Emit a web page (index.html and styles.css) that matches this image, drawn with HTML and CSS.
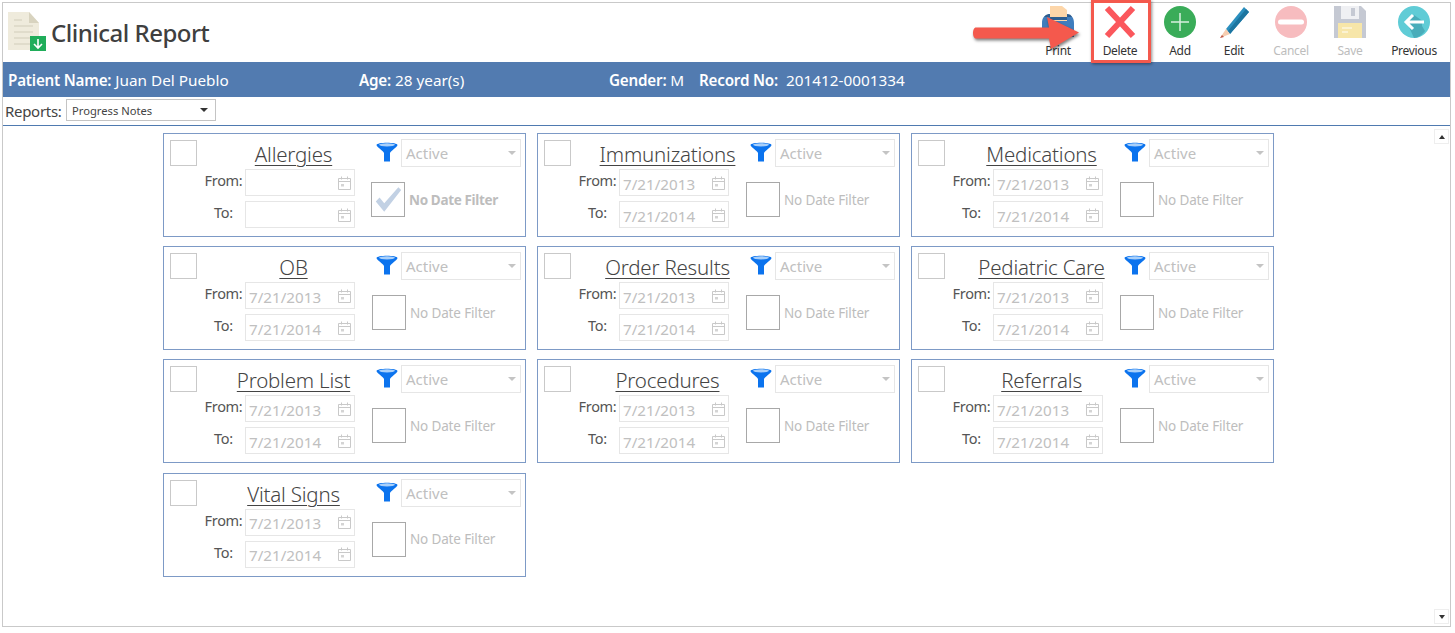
FILE: index.html
```html
<!DOCTYPE html>
<html lang="en">
<head>
<meta charset="utf-8">
<title>Clinical Report</title>
<link rel="stylesheet" href="styles.css">
</head>
<body>
<svg class="defs" width="0" height="0" aria-hidden="true">
  <symbol id="funnel" viewBox="0 0 22 21">
    <path d="M.5 4C.5 1 21.500 1 21.500 4C21.500 6 15 9.500 14 12V20.500H8V12C7 9.500 .5 6 .5 4Z" fill="#0b73ee"/>
    <ellipse cx="11" cy="3.800" rx="8" ry="1.600" fill="#a9d0fa"/>
  </symbol>
  <symbol id="cal" viewBox="0 0 13 14">
    <path d="M.5 2.500h12v11H.5zM.5 5.500h12M3.500 .5v3M9.500 .5v3" fill="none" stroke="#c9c9c9"/>
    <path d="M3 8h3v2.500H3z" fill="#d4d4d4"/>
  </symbol>
</svg>
<div class="window">
  <header class="topbar">
    <svg class="logo" width="40" height="40" viewBox="0 0 40 40">
      <path d="M0 0H21L31 11V38H0Z" fill="#efebdc"/>
      <path d="M21 0L31 11H21Z" fill="#d8d3bf"/>
      <path d="M6 8H14M6 14H25M6 20H25M6 26H25M6 32H22" stroke="#dcd7c5" stroke-width="1.500"/>
      <path d="M22 24H38V39H22Z" fill="#20ad5a"/>
      <path d="M30 27V36M26 32L30 36L34 32" fill="none" stroke="#fff" stroke-width="1.600"/>
    </svg>
    <h1 class="title">Clinical Report</h1>
    <nav class="toolbar">
      <div class="tool">
        <svg width="34" height="34" viewBox="0 0 34 34">
          <path d="M9 1H21L26 5V20H9Z" fill="#fdd6a9"/>
          <path d="M1 18C1 12 4 10 9 10V16H26V10C30 10 33 12 33 18V32H1Z" fill="#3f7dbd"/>
          <path d="M3 12C5 9 7 9 9 9V15H26V9C29 9 30 10 31 12Z" fill="#2e5e90"/>
        </svg>
        <span>Print</span>
      </div>
      <div class="tool">
        <svg width="34" height="34" viewBox="0 0 34 34">
          <path d="M4 3L30 31M30 3L4 31" stroke="#fb575c" stroke-width="6"/>
        </svg>
        <span>Delete</span>
      </div>
      <div class="tool">
        <svg width="34" height="34" viewBox="0 0 34 34">
          <circle cx="17" cy="17" r="16" fill="#3aac59"/>
          <path d="M17 8V26M8 17H26" stroke="#d8f0df" stroke-width="1.500"/>
        </svg>
        <span>Add</span>
      </div>
      <div class="tool">
        <svg width="34" height="34" viewBox="0 0 34 34">
          <path d="M9 24L27 2L32 7L13 29Z" fill="#2b8fbe"/>
          <path d="M11 26L29 4L32 7L13 29Z" fill="#1c75a0"/>
          <path d="M9 24L13 29L3 33Z" fill="#f6cdb0"/>
          <path d="M5 30L7 32L3 33Z" fill="#c05a4a"/>
        </svg>
        <span>Edit</span>
      </div>
      <div class="tool off">
        <svg width="34" height="34" viewBox="0 0 34 34">
          <circle cx="17" cy="17" r="16" fill="#f7bcbf"/>
          <path d="M6.500 17H27.500" stroke="#fff" stroke-width="5" stroke-linecap="round"/>
        </svg>
        <span>Cancel</span>
      </div>
      <div class="tool off">
        <svg width="34" height="34" viewBox="0 0 34 34">
          <path d="M1 1H28L33 6V33H1Z" fill="#c5c9d3"/>
          <path d="M8 1H26V14H8Z" fill="#eff0f3"/>
          <path d="M18 3H22V11H18Z" fill="#c5c9d3"/>
          <path d="M5 18H29V33H5Z" fill="#f7e6a9"/>
          <path d="M9 23H19M9 27H15" stroke="#fdf6de" stroke-width="1.500"/>
        </svg>
        <span>Save</span>
      </div>
      <div class="tool">
        <svg width="34" height="34" viewBox="0 0 34 34">
          <circle cx="17" cy="17" r="16" fill="#60ccd6"/>
          <path d="M10 17L17 10L27 17H25V21L28 26C25 30 21 33 17 33L12 22Z" fill="#49adba"/>
          <path d="M27 17H9M16 10L9 17L16 24" fill="none" stroke="#fff" stroke-width="3"/>
        </svg>
        <span>Previous</span>
      </div>
    </nav>
  </header>
  <div class="band">
    <div class="field f-name"><b>Patient Name:</b> Juan Del Pueblo</div>
    <div class="field f-age"><b>Age:</b> 28 year(s)</div>
    <div class="field f-gender"><b>Gender:</b> M</div>
    <div class="field f-record"><b>Record No:</b><span class="rec">201412-0001334</span></div>
  </div>
  <div class="reports">
    <label class="reports-label">Reports:</label>
    <div class="reports-select"><span>Progress Notes</span><i class="caret dark"></i></div>
  </div>
  <main class="content">
    <section class="cards">
      <article class="card">
        <div class="card-head">
          <div class="check"></div>
          <h2 class="card-title"><span>Allergies</span></h2>
          <svg class="funnel" width="22" height="21"><use href="#funnel"/></svg>
          <div class="status"><span>Active</span><i class="caret"></i></div>
        </div>
        <div class="card-body">
          <div class="dates">
            <div class="date-row"><label>From:</label><div class="date"><span></span><svg width="13" height="14"><use href="#cal"/></svg></div></div>
            <div class="date-row"><label>To:</label><div class="date"><span></span><svg width="13" height="14"><use href="#cal"/></svg></div></div>
          </div>
          <div class="nofilter on">
            <div class="bigcheck"><svg width="32" height="33" viewBox="0 0 34 34"><path d="M4 19L8 15L13 21L28 4L31 7L13 30Z" fill="#c2d1e4"/></svg></div>
            <span>No Date Filter</span>
          </div>
        </div>
      </article>
      <article class="card">
        <div class="card-head">
          <div class="check"></div>
          <h2 class="card-title"><span>Immunizations</span></h2>
          <svg class="funnel" width="22" height="21"><use href="#funnel"/></svg>
          <div class="status"><span>Active</span><i class="caret"></i></div>
        </div>
        <div class="card-body">
          <div class="dates">
            <div class="date-row"><label>From:</label><div class="date"><span>7/21/2013</span><svg width="13" height="14"><use href="#cal"/></svg></div></div>
            <div class="date-row"><label>To:</label><div class="date"><span>7/21/2014</span><svg width="13" height="14"><use href="#cal"/></svg></div></div>
          </div>
          <div class="nofilter"><div class="bigcheck"></div><span>No Date Filter</span></div>
        </div>
      </article>
      <article class="card">
        <div class="card-head">
          <div class="check"></div>
          <h2 class="card-title"><span>Medications</span></h2>
          <svg class="funnel" width="22" height="21"><use href="#funnel"/></svg>
          <div class="status"><span>Active</span><i class="caret"></i></div>
        </div>
        <div class="card-body">
          <div class="dates">
            <div class="date-row"><label>From:</label><div class="date"><span>7/21/2013</span><svg width="13" height="14"><use href="#cal"/></svg></div></div>
            <div class="date-row"><label>To:</label><div class="date"><span>7/21/2014</span><svg width="13" height="14"><use href="#cal"/></svg></div></div>
          </div>
          <div class="nofilter"><div class="bigcheck"></div><span>No Date Filter</span></div>
        </div>
      </article>
      <article class="card">
        <div class="card-head">
          <div class="check"></div>
          <h2 class="card-title"><span>OB</span></h2>
          <svg class="funnel" width="22" height="21"><use href="#funnel"/></svg>
          <div class="status"><span>Active</span><i class="caret"></i></div>
        </div>
        <div class="card-body">
          <div class="dates">
            <div class="date-row"><label>From:</label><div class="date"><span>7/21/2013</span><svg width="13" height="14"><use href="#cal"/></svg></div></div>
            <div class="date-row"><label>To:</label><div class="date"><span>7/21/2014</span><svg width="13" height="14"><use href="#cal"/></svg></div></div>
          </div>
          <div class="nofilter"><div class="bigcheck"></div><span>No Date Filter</span></div>
        </div>
      </article>
      <article class="card">
        <div class="card-head">
          <div class="check"></div>
          <h2 class="card-title"><span>Order Results</span></h2>
          <svg class="funnel" width="22" height="21"><use href="#funnel"/></svg>
          <div class="status"><span>Active</span><i class="caret"></i></div>
        </div>
        <div class="card-body">
          <div class="dates">
            <div class="date-row"><label>From:</label><div class="date"><span>7/21/2013</span><svg width="13" height="14"><use href="#cal"/></svg></div></div>
            <div class="date-row"><label>To:</label><div class="date"><span>7/21/2014</span><svg width="13" height="14"><use href="#cal"/></svg></div></div>
          </div>
          <div class="nofilter"><div class="bigcheck"></div><span>No Date Filter</span></div>
        </div>
      </article>
      <article class="card">
        <div class="card-head">
          <div class="check"></div>
          <h2 class="card-title"><span>Pediatric Care</span></h2>
          <svg class="funnel" width="22" height="21"><use href="#funnel"/></svg>
          <div class="status"><span>Active</span><i class="caret"></i></div>
        </div>
        <div class="card-body">
          <div class="dates">
            <div class="date-row"><label>From:</label><div class="date"><span>7/21/2013</span><svg width="13" height="14"><use href="#cal"/></svg></div></div>
            <div class="date-row"><label>To:</label><div class="date"><span>7/21/2014</span><svg width="13" height="14"><use href="#cal"/></svg></div></div>
          </div>
          <div class="nofilter"><div class="bigcheck"></div><span>No Date Filter</span></div>
        </div>
      </article>
      <article class="card">
        <div class="card-head">
          <div class="check"></div>
          <h2 class="card-title"><span>Problem List</span></h2>
          <svg class="funnel" width="22" height="21"><use href="#funnel"/></svg>
          <div class="status"><span>Active</span><i class="caret"></i></div>
        </div>
        <div class="card-body">
          <div class="dates">
            <div class="date-row"><label>From:</label><div class="date"><span>7/21/2013</span><svg width="13" height="14"><use href="#cal"/></svg></div></div>
            <div class="date-row"><label>To:</label><div class="date"><span>7/21/2014</span><svg width="13" height="14"><use href="#cal"/></svg></div></div>
          </div>
          <div class="nofilter"><div class="bigcheck"></div><span>No Date Filter</span></div>
        </div>
      </article>
      <article class="card">
        <div class="card-head">
          <div class="check"></div>
          <h2 class="card-title"><span>Procedures</span></h2>
          <svg class="funnel" width="22" height="21"><use href="#funnel"/></svg>
          <div class="status"><span>Active</span><i class="caret"></i></div>
        </div>
        <div class="card-body">
          <div class="dates">
            <div class="date-row"><label>From:</label><div class="date"><span>7/21/2013</span><svg width="13" height="14"><use href="#cal"/></svg></div></div>
            <div class="date-row"><label>To:</label><div class="date"><span>7/21/2014</span><svg width="13" height="14"><use href="#cal"/></svg></div></div>
          </div>
          <div class="nofilter"><div class="bigcheck"></div><span>No Date Filter</span></div>
        </div>
      </article>
      <article class="card">
        <div class="card-head">
          <div class="check"></div>
          <h2 class="card-title"><span>Referrals</span></h2>
          <svg class="funnel" width="22" height="21"><use href="#funnel"/></svg>
          <div class="status"><span>Active</span><i class="caret"></i></div>
        </div>
        <div class="card-body">
          <div class="dates">
            <div class="date-row"><label>From:</label><div class="date"><span>7/21/2013</span><svg width="13" height="14"><use href="#cal"/></svg></div></div>
            <div class="date-row"><label>To:</label><div class="date"><span>7/21/2014</span><svg width="13" height="14"><use href="#cal"/></svg></div></div>
          </div>
          <div class="nofilter"><div class="bigcheck"></div><span>No Date Filter</span></div>
        </div>
      </article>
      <article class="card">
        <div class="card-head">
          <div class="check"></div>
          <h2 class="card-title"><span>Vital Signs</span></h2>
          <svg class="funnel" width="22" height="21"><use href="#funnel"/></svg>
          <div class="status"><span>Active</span><i class="caret"></i></div>
        </div>
        <div class="card-body">
          <div class="dates">
            <div class="date-row"><label>From:</label><div class="date"><span>7/21/2013</span><svg width="13" height="14"><use href="#cal"/></svg></div></div>
            <div class="date-row"><label>To:</label><div class="date"><span>7/21/2014</span><svg width="13" height="14"><use href="#cal"/></svg></div></div>
          </div>
          <div class="nofilter"><div class="bigcheck"></div><span>No Date Filter</span></div>
        </div>
      </article>
    </section>
    <div class="scroll">
      <button class="scroll-btn"><i class="tri up"></i></button>
      <button class="scroll-btn"><i class="tri down"></i></button>
    </div>
  </main>
  <div class="callout-box"></div>
  <svg class="callout-arrow" width="112" height="40" viewBox="0 0 112 40">
    <path d="M5 11.500H78L76 1L108 16.500L80 33L78 22.500H5C1 22.500 1 11.500 5 11.500Z" fill="#f4594d"/>
  </svg>
</div>
</body>
</html>
```
FILE: styles.css
```css
* { box-sizing: border-box; }
html, body { margin: 0; padding: 0; background: #fff; }
body {
  width: 1455px;
  height: 633px;
  overflow: hidden;
  font-family: "Noto Sans", "Open Sans", sans-serif;
  color: #444;
}
.defs { position: absolute; }
.window {
  position: relative;
  margin: 2px 0 0 2px;
  width: 1449px;
  height: 625px;
  border: 1px solid #c9c9c9;
  display: flex;
  flex-direction: column;
}
.topbar {
  height: 59px;
  flex: none;
  display: flex;
  align-items: flex-start;
}
.logo { margin: 9px 0 0 5px; flex: none; }
.title {
  margin: 13px 0 0 3px;
  font-size: 24px;
  font-weight: 500;
  line-height: 34px;
  color: #3f3f3f;
  letter-spacing: -0.5px;
}
.toolbar {
  margin-left: auto;
  margin-right: 1px;
  display: grid;
  grid-template-columns: 58px 66px 54px 54px 60px 58px 70px;
}
.tool {
  display: flex;
  flex-direction: column;
  align-items: center;
  padding-top: 2px;
  font-size: 12px;
  line-height: 16px;
  color: #333;
  letter-spacing: -0.3px;
}
.tool svg { display: block; }
.tool span { margin-top: 4px; }
.tool.off span { color: #bdbdbd; }
.band {
  height: 35px;
  flex: none;
  background: #527bb0;
  color: #fff;
  display: flex;
  align-items: center;
  padding-left: 5px;
  font-size: 15.300px;
}
.band b { font-weight: 600; font-size: 15.200px; letter-spacing: -0.2px; }
.field { white-space: nowrap; }
.f-name { width: 351px; }
.f-age { width: 250px; }
.f-gender { width: 90px; }
.rec { margin-left: 8px; }
.reports {
  height: 29px;
  flex: none;
  border-bottom: 1px solid #4f7ab0;
  display: flex;
  align-items: flex-start;
  padding: 2px 0 0 2px;
}
.reports-label {
  font-size: 15px;
  line-height: 24px;
  color: #444;
  width: 61px;
  letter-spacing: -0.3px;
}
.reports-select {
  width: 150px;
  height: 22px;
  border: 1px solid #c4c4c4;
  display: flex;
  align-items: center;
  justify-content: space-between;
  padding: 0 7px 0 5px;
  font-size: 11.200px;
  color: #444;
}
.caret {
  width: 0;
  height: 0;
  border-left: 4px solid transparent;
  border-right: 4px solid transparent;
  border-top: 4px solid #c4c4c4;
}
.caret.dark { border-top-color: #333; }
.content {
  flex: 1;
  display: flex;
  min-height: 0;
}
.cards {
  margin: 7px 0 0 160px;
  display: grid;
  grid-template-columns: repeat(3, 363px);
  grid-auto-rows: 104px;
  column-gap: 11px;
  row-gap: 9.200px;
  align-content: start;
}
.card {
  border: 1px solid #7d9ac6;
  padding: 5px 4px 0 5px;
}
.card-head {
  display: flex;
  align-items: flex-start;
  height: 27px;
}
.check {
  width: 27px;
  height: 26px;
  margin: 1px 0 0 1px;
  flex: none;
  border: 1px solid #c9c9c9;
}
.card-title {
  margin: 0;
  width: 179px;
  flex: none;
  padding-left: 14px;
  text-align: center;
  font-size: 20.500px;
  font-weight: 300;
  line-height: 30px;
  color: #444;
  white-space: nowrap;
  letter-spacing: -0.2px;
}
.card-title span { text-decoration: underline; text-decoration-thickness: 1px; text-underline-offset: 3px; }
.funnel { flex: none; margin-top: 2px; }
.status {
  margin-left: 3px;
  width: 120px;
  height: 28px;
  flex: none;
  border: 1px solid #e6e6e6;
  display: flex;
  align-items: center;
  justify-content: space-between;
  padding: 0 4px 0 4px;
  font-size: 15px;
  color: #c0c0c0;
}
.card-body {
  display: flex;
  margin-top: 3px;
  align-items: flex-start;
}
.dates {
  width: 186px;
  display: flex;
  flex-direction: column;
  gap: 5px;
  flex: none;
}
.date-row {
  display: flex;
  height: 27px;
}
.date-row label {
  width: 76px;
  padding-left: 33px;
  text-align: center;
  font-size: 14.500px;
  line-height: 22px;
  color: #555;
  letter-spacing: -0.3px;
}
.date {
  width: 110px;
  height: 27px;
  border: 1px solid #e6e6e6;
  display: flex;
  align-items: center;
  justify-content: space-between;
  padding: 0 3px 0 3px;
  font-size: 15.200px;
  color: #c0c0c0;
}
.date span { padding-top: 2px; }
.nofilter {
  display: flex;
  align-items: center;
  margin: 13px 0 0 17px;
  font-size: 13.500px;
  color: #bdbdbd;
  white-space: nowrap;
  letter-spacing: -0.15px;
}
.nofilter.on { font-weight: 700; margin-left: 16px; letter-spacing: -0.35px; }
.bigcheck {
  width: 34px;
  height: 35px;
  margin-right: 4px;
  flex: none;
  border: 1px solid #a8a8a8;
}
.bigcheck svg { display: block; }
.scroll {
  margin-left: auto;
  width: 15px;
  margin-right: 1px;
  padding: 3px 0 2px;
  display: flex;
  flex-direction: column;
  justify-content: space-between;
}
.scroll-btn {
  width: 15px;
  height: 15px;
  padding: 0;
  background: #fff;
  border: 1px solid #eee;
  display: flex;
  align-items: center;
  justify-content: center;
}
.tri {
  width: 0;
  height: 0;
  border-left: 3.500px solid transparent;
  border-right: 3.500px solid transparent;
}
.tri.up { border-bottom: 4px solid #333; }
.tri.down { border-top: 4px solid #333; }
.callout-box {
  position: absolute;
  left: 1088px;
  top: -3px;
  width: 60px;
  height: 63px;
  border: 3px solid #f4594d;
  box-shadow: 1px 1px 3px rgba(0, 0, 0, .45);
}
.callout-arrow {
  position: absolute;
  left: 968px;
  top: 13px;
  filter: drop-shadow(1px 2px 1.500px rgba(0, 0, 0, .5));
}
```
